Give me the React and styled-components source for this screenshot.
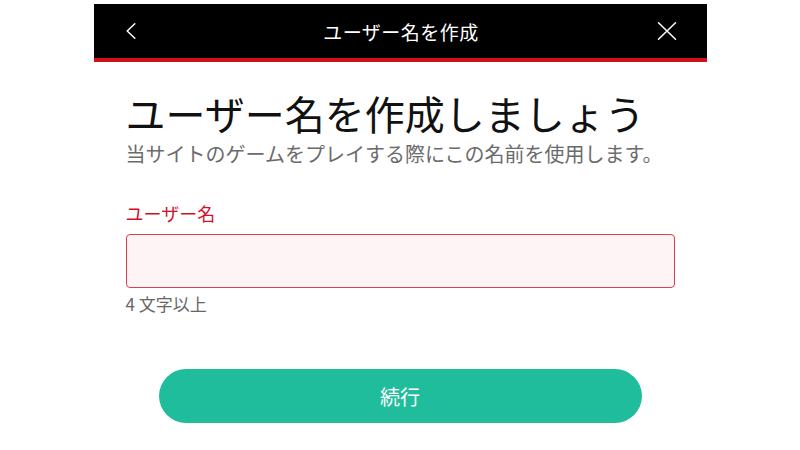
import React from "react";
import styled, { createGlobalStyle } from "styled-components";

const Global = createGlobalStyle`
  html, body { margin: 0; padding: 0; background: #fff; }
  body {
    font-family: "Noto Sans CJK JP", "Noto Sans", "Liberation Sans", sans-serif;
    padding-top: 4px;
  }
`;

const Screen = styled.div`
  width: 613px;
  margin: 0 auto;
  display: flex;
  flex-direction: column;
`;

const Header = styled.header`
  height: 54px;
  background: #000;
  border-bottom: 4px solid #d0101b;
  display: grid;
  grid-template-columns: 1fr auto 1fr;
  align-items: center;
  padding: 0 30px 0 32px;
  color: #fff;
`;

const IconButton = styled.button`
  justify-self: ${(p) => (p.$end ? "end" : "start")};
  background: none;
  border: none;
  padding: 0;
  height: 54px;
  display: flex;
  align-items: center;
  justify-content: center;
  color: #fff;
  cursor: pointer;
`;

const HeaderTitle = styled.h1`
  margin: 0;
  text-align: center;
  font-size: 19px;
  font-weight: 400;
  letter-spacing: 0.5px;
  line-height: 1;
`;

const Body = styled.main`
  padding: 29px 32px 0;
  display: flex;
  flex-direction: column;
`;

const Heading = styled.h2`
  margin: 0;
  font-size: 40px;
  font-weight: 400;
  line-height: 44px;
  color: #111;
`;

const Subtitle = styled.p`
  margin: 5px 0 0;
  font-size: 20px;
  line-height: 28px;
  color: #6b6b6b;
`;

const Field = styled.div`
  margin-top: 32px;
  display: flex;
  flex-direction: column;
`;

const Label = styled.label`
  font-size: 18px;
  line-height: 26px;
  color: #d0112b;
`;

const Input = styled.input`
  margin-top: 8px;
  box-sizing: border-box;
  height: 54px;
  width: 100%;
  border: 1px solid #d9404c;
  border-radius: 4px;
  background: #fff4f5;
  outline: none;
  padding: 0 12px;
  font-size: 18px;
  font-family: inherit;
`;

const Hint = styled.div`
  margin-top: 5px;
  font-size: 17px;
  line-height: 22px;
  color: #666;
`;

const Primary = styled.button`
  align-self: center;
  margin-top: 54px;
  width: 483px;
  height: 54px;
  border: none;
  border-radius: 27px;
  background: #1fbd9c;
  color: #fff;
  font-family: inherit;
  font-size: 20px;
  cursor: pointer;
`;

export default function App() {
  return (
    <>
      <Global />
      <Screen>
        <Header>
          <IconButton aria-label="戻る">
            <svg width="10" height="16" viewBox="0 0 10 16" fill="none">
              <path d="M8.8 0.8 L1.2 8 L8.8 15.2" stroke="#fff" strokeWidth="1.5" strokeLinecap="round" strokeLinejoin="round" />
            </svg>
          </IconButton>
          <HeaderTitle>ユーザー名を作成</HeaderTitle>
          <IconButton $end aria-label="閉じる">
            <svg width="20" height="18" viewBox="0 0 20 18" fill="none">
              <path d="M1.5 0.8 L18.5 17.2 M18.5 0.8 L1.5 17.2" stroke="#fff" strokeWidth="1.5" strokeLinecap="round" />
            </svg>
          </IconButton>
        </Header>
        <Body>
          <Heading>ユーザー名を作成しましょう</Heading>
          <Subtitle>当サイトのゲームをプレイする際にこの名前を使用します。</Subtitle>
          <Field>
            <Label htmlFor="username">ユーザー名</Label>
            <Input id="username" />
            <Hint>4 文字以上</Hint>
          </Field>
          <Primary>続行</Primary>
        </Body>
      </Screen>
    </>
  );
}
